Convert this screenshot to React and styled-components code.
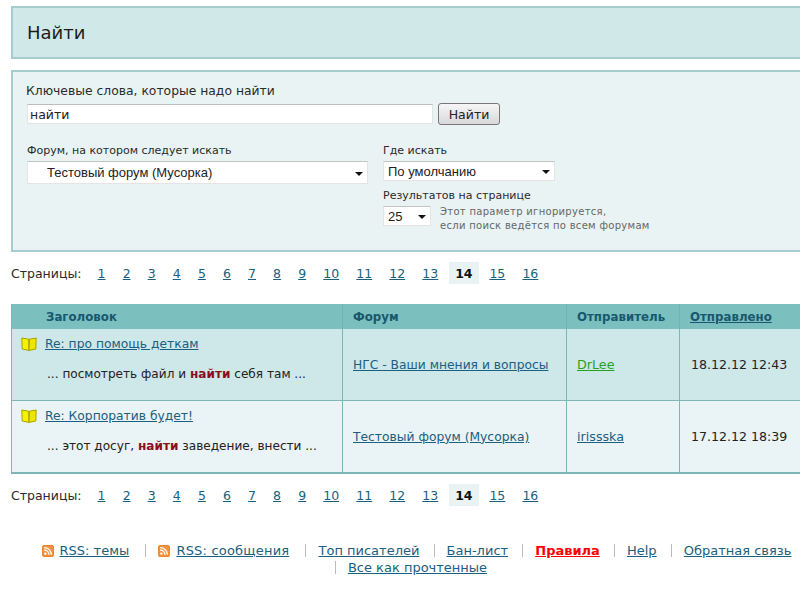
import React from "react";
import styled, { createGlobalStyle } from "styled-components";

const GlobalStyle = createGlobalStyle`
  html, body {
    margin: 0;
    padding: 0;
    height: 100%;
    overflow: hidden;
    background: #fff;
  }
  body {
    font-family: "DejaVu Sans", Verdana, sans-serif;
    font-size: 12.3px;
    color: #222;
  }
`;

const Page = styled.div`
  width: 810px;
  margin-left: 11px;
  padding-top: 6px;
`;

const TitleBox = styled.div`
  height: 49px;
  display: flex;
  align-items: center;
  padding-left: 14px;
  background: #d0e8e8;
  border: 2px solid #a5cdcd;
  border-right: none;
`;

const Title = styled.h1`
  margin: 0;
  font-size: 18px;
  font-weight: 400;
  color: #1c1c1c;
`;

const SearchBox = styled.form`
  height: 166px;
  margin-top: 11px;
  padding: 12px 0 0 13px;
  background: #e9f3f4;
  border: 2px solid #a5cdcd;
  border-right: none;
  box-sizing: content-box;
`;

const Label = styled.label`
  display: block;
  font-size: ${(p) => p.$size || 11}px;
  line-height: 15px;
  color: #2a2a2a;
`;

const KeywordRow = styled.div`
  display: flex;
  align-items: center;
  gap: 5px;
  margin: 4px 0 0 1px;
`;

const Keyword = styled.input`
  width: 406px;
  height: 20px;
  box-sizing: border-box;
  padding: 0 2px;
  font-family: "DejaVu Sans", Verdana, sans-serif;
  font-size: 12.5px;
  color: #222;
  background: #fff;
  border: 1px solid #e4e4e4;
  border-top: 1px solid #bdbdbd;
  outline: none;
`;

const Submit = styled.button`
  width: 62px;
  height: 22px;
  padding: 0;
  font-family: "DejaVu Sans", Verdana, sans-serif;
  font-size: 12.5px;
  color: #222;
  background: linear-gradient(#f6f6f6, #d8d8d8);
  border: 1px solid #777;
  border-radius: 3px;
`;

const Columns = styled.div`
  display: flex;
  margin: 18px 0 0 1px;
`;

const LeftColumn = styled.div`
  width: 356px;
`;

const RightColumn = styled.div`
  display: flex;
  flex-direction: column;
`;

const SelectBox = styled.div`
  position: relative;
  width: ${(p) => p.$width}px;
  height: ${(p) => p.$height || 20}px;
  margin-top: 3px;
`;

const Select = styled.select`
  appearance: none;
  display: block;
  width: 100%;
  height: 100%;
  padding: 0 0 0 ${(p) => p.$indent || 4}px;
  font-family: "Liberation Sans", Arial, sans-serif;
  font-size: 13px;
  color: #222;
  background: #fff;
  border: 1px solid #e4e4e4;
  border-top: 1px solid #c4c4c4;
  border-radius: 0;
  outline: none;
`;

const Caret = styled.span`
  position: absolute;
  right: 5px;
  top: 50%;
  margin-top: -1px;
  border-left: 4px solid transparent;
  border-right: 4px solid transparent;
  border-top: 4px solid #111;
`;

const PerPageLabel = styled(Label)`
  margin-top: 7px;
`;

const PerPageRow = styled.div`
  display: flex;
  gap: 9px;
`;

const Note = styled.div`
  margin-top: 2px;
  font-size: 10px;
  line-height: 14px;
  color: #666;
  letter-spacing: 0.3px;
`;

const Pager = styled.div`
  display: flex;
  align-items: center;
  height: 22px;
  margin-top: ${(p) => p.$top}px;
  font-size: 12.5px;
`;

const PagerLabel = styled.span`
  width: 78px;
  color: #2a2a2a;
`;

const PageLink = styled.a`
  margin: 0 8.57px;
  color: #1a6080;
  text-decoration: underline;
  cursor: pointer;
`;

const CurrentPage = styled.b`
  width: 30px;
  height: 22px;
  margin: 0 2px;
  display: flex;
  align-items: center;
  justify-content: center;
  color: #111;
  background: #e9f3f4;
`;

const Table = styled.table`
  width: 799px;
  margin-top: 20px;
  table-layout: fixed;
  border-collapse: separate;
  border-spacing: 0;
  border-left: 1px solid #80b5b5;
  border-bottom: 2px solid #80b5b5;
`;

const HeadCell = styled.th`
  height: 25px;
  padding: 0 0 0 ${(p) => p.$pad || 10}px;
  box-sizing: border-box;
  text-align: left;
  font-size: 11.8px;
  font-weight: 700;
  color: #18586e;
  background: #7bbfbf;
  border-left: ${(p) => (p.$first ? "none" : "1px solid #72b3b3")};
`;

const SortLink = styled.a`
  color: #18586e;
  text-decoration: underline;
`;

const Cell = styled.td`
  height: ${(p) => p.$height}px;
  padding: 0 0 0 10px;
  box-sizing: border-box;
  background: ${(p) => (p.$alt ? "#eaf3f5" : "#cee7e9")};
  border-left: 1px solid #80b5b5;
  border-top: ${(p) => (p.$alt ? "1px solid #80b5b5" : "none")};
`;

const TopicCell = styled(Cell)`
  padding: 8px 0 0 9px;
  vertical-align: top;
  border-left: none;
`;

const DateCell = styled(Cell)`
  padding-left: 11px;
  font-size: 12.6px;
`;

const TopicRow = styled.div`
  display: flex;
  align-items: center;
  gap: 8px;
`;

const Excerpt = styled.div`
  margin: 16px 0 0 26px;
  font-size: 12.1px;
  color: #222;
`;

const Hit = styled.b`
  color: #8b0f1a;
`;

const TableLink = styled.a`
  color: ${(p) => p.$color || "#1a6080"};
  font-size: ${(p) => p.$size || 12.3}px;
  text-decoration: underline;
  cursor: pointer;
`;

const Footer = styled.div`
  margin-top: 36px;
  text-align: center;
  font-size: 13px;
  line-height: 17px;
`;

const FooterItem = styled.span`
  display: inline-block;
  padding: 0 ${(p) => (p.$rss ? 12 : 10)}px 0 ${(p) => (p.$first ? 11 : 12)}px;
  line-height: 13px;
  border-left: ${(p) => (p.$first ? "none" : "1px solid #bbb")};
`;

const FooterLink = styled.a`
  color: ${(p) => (p.$rules ? "#f00" : "#1a6080")};
  font-weight: ${(p) => (p.$rules ? 700 : 400)};
  letter-spacing: ${(p) => p.$spread || 0}px;
  text-decoration: underline;
  cursor: pointer;
`;

const RssGlyph = styled.svg`
  vertical-align: -2px;
  margin-right: 6px;
`;

const BookIcon = () => (
  <svg width="16" height="14" viewBox="0 0 16 14">
    <path d="M0.8 1 L7.6 2.2 L8 13.4 L1.2 12 Z" fill="#f6f200" stroke="#a8a000" />
    <path d="M15.2 1 L8.4 2.2 L8 13.4 L14.8 12 Z" fill="#ece600" stroke="#a8a000" />
  </svg>
);

const RssIcon = () => (
  <RssGlyph width="12" height="12" viewBox="0 0 12 12">
    <rect x="0.5" y="0.5" width="11" height="11" rx="1.5" fill="#f5913a" stroke="#e8872e" />
    <circle cx="3.4" cy="8.6" r="1.2" fill="#fff" />
    <path d="M2.2 5 A4.8 4.8 0 0 1 7 9.8 M2.2 2.6 A7.2 7.2 0 0 1 9.4 9.8" fill="none" stroke="#fff" strokeWidth="1.3" />
  </RssGlyph>
);

const Pagination = ({ top }) => (
  <Pager $top={top}>
    <PagerLabel>Страницы:</PagerLabel>
    {[1, 2, 3, 4, 5, 6, 7, 8, 9, 10, 11, 12, 13].map((n) => (
      <PageLink key={n}>{n}</PageLink>
    ))}
    <CurrentPage>14</CurrentPage>
    {[15, 16].map((n) => (
      <PageLink key={n}>{n}</PageLink>
    ))}
  </Pager>
);

const rows = [
  {
    topic: "Re: про помощь деткам",
    before: "... посмотреть файл и ",
    after: " себя там ...",
    forum: "НГС - Ваши мнения и вопросы",
    author: "DrLee",
    authorColor: "#2aa020",
    date: "18.12.12 12:43",
  },
  {
    topic: "Re: Корпоратив будет!",
    before: "... этот досуг, ",
    after: " заведение, внести ...",
    forum: "Тестовый форум (Мусорка)",
    author: "irissska",
    date: "17.12.12 18:39",
  },
];

const App = () => (
  <Page>
    <GlobalStyle />
    <TitleBox>
      <Title>Найти</Title>
    </TitleBox>

    <SearchBox onSubmit={(e) => e.preventDefault()}>
      <Label $size={12.35}>Ключевые слова, которые надо найти</Label>
      <KeywordRow>
        <Keyword defaultValue="найти" />
        <Submit type="submit">Найти</Submit>
      </KeywordRow>
      <Columns>
        <LeftColumn>
          <Label>Форум, на котором следует искать</Label>
          <SelectBox $width={341} $height={23}>
            <Select $indent={19}>
              <option>Тестовый форум (Мусорка)</option>
            </Select>
            <Caret />
          </SelectBox>
        </LeftColumn>
        <RightColumn>
          <Label>Где искать</Label>
          <SelectBox $width={172}>
            <Select>
              <option>По умолчанию</option>
            </Select>
            <Caret />
          </SelectBox>
          <PerPageLabel>Результатов на странице</PerPageLabel>
          <PerPageRow>
            <SelectBox $width={48}>
              <Select>
                <option>25</option>
              </Select>
              <Caret />
            </SelectBox>
            <Note>
              Этот параметр игнорируется,
              <br />
              если поиск ведётся по всем форумам
            </Note>
          </PerPageRow>
        </RightColumn>
      </Columns>
    </SearchBox>

    <Pagination top={10} />

    <Table>
      <colgroup>
        <col width="330" />
        <col width="224" />
        <col width="113" />
        <col width="131" />
      </colgroup>
      <thead>
        <tr>
          <HeadCell $first $pad={34}>Заголовок</HeadCell>
          <HeadCell>Форум</HeadCell>
          <HeadCell>Отправитель</HeadCell>
          <HeadCell>
            <SortLink>Отправлено</SortLink>
          </HeadCell>
        </tr>
      </thead>
      <tbody>
        {rows.map((row, i) => (
          <tr key={row.topic}>
            <TopicCell $alt={i === 1} $height={i === 1 ? 72 : 71}>
              <TopicRow>
                <BookIcon />
                <TableLink>{row.topic}</TableLink>
              </TopicRow>
              <Excerpt>
                {row.before}
                <Hit>найти</Hit>
                {row.after}
              </Excerpt>
            </TopicCell>
            <Cell $alt={i === 1}>
              <TableLink>{row.forum}</TableLink>
            </Cell>
            <Cell $alt={i === 1}>
              <TableLink $color={row.authorColor} $size={12.7}>{row.author}</TableLink>
            </Cell>
            <DateCell $alt={i === 1}>{row.date}</DateCell>
          </tr>
        ))}
      </tbody>
    </Table>

    <Pagination top={10} />

    <Footer>
      <FooterItem $first $rss>
        <RssIcon />
        <FooterLink>RSS: темы</FooterLink>
      </FooterItem>{" "}
      <FooterItem $rss>
        <RssIcon />
        <FooterLink $spread={0.2}>RSS: сообщения</FooterLink>
      </FooterItem>{" "}
      <FooterItem><FooterLink>Топ писателей</FooterLink></FooterItem>{" "}
      <FooterItem><FooterLink>Бан-лист</FooterLink></FooterItem>{" "}
      <FooterItem><FooterLink $rules>Правила</FooterLink></FooterItem>{" "}
      <FooterItem><FooterLink>Help</FooterLink></FooterItem>{" "}
      <FooterItem><FooterLink>Обратная связь</FooterLink></FooterItem>{" "}
      <FooterItem><FooterLink>Все как прочтенные</FooterLink></FooterItem>
    </Footer>
  </Page>
);

export default App;
